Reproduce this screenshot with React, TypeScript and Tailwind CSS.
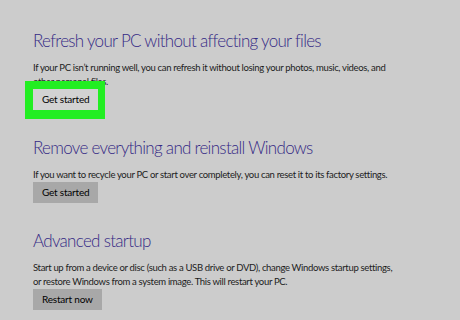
export default function App() {
  const sections = [
    {
      title: 'Refresh your PC without affecting your files',
      text: "If your PC isn\u2019t running well, you can refresh it without losing your photos, music, videos, and other personal files.",
      button: 'Get started',
      highlight: true,
    },
    {
      title: 'Remove everything and reinstall Windows',
      text: 'If you want to recycle your PC or start over completely, you can reset it to its factory settings.',
      button: 'Get started',
    },
    {
      title: 'Advanced startup',
      text: 'Start up from a device or disc (such as a USB drive or DVD), change Windows startup settings, or restore Windows from a system image. This will restart your PC.',
      button: 'Restart now',
    },
  ]

  return (
    <div className="w-[460px] h-[320px] overflow-hidden bg-[#cccccc] pl-[33px] pt-[31px] font-['Lato',sans-serif]">
      <div className="flex flex-col gap-[28px]">
        {sections.map((s) => (
          <section key={s.title} className="flex flex-col">
            <h2 className="text-[17px] leading-[20px] font-light text-[#352a85] tracking-[-0.7px]">{s.title}</h2>
            <p className="mt-[10px] w-[362px] text-[9.5px] leading-[14px] text-[#1c1c1c] tracking-[-0.33px]">{s.text}</p>
            <div className="relative flex">
              {s.highlight && (
                <div className="absolute left-[-8px] top-[-8px] w-[80px] h-[38px] bg-[#22ee22]" />
              )}
              <button className={`relative h-[21px] px-[9px] text-[10px] leading-[21px] tracking-[-0.2px] text-black ${s.highlight ? 'bg-[#d2d2d2]' : 'bg-[#a8a8a8]'}`}>
                {s.button}
              </button>
            </div>
          </section>
        ))}
      </div>
    </div>
  )
}
